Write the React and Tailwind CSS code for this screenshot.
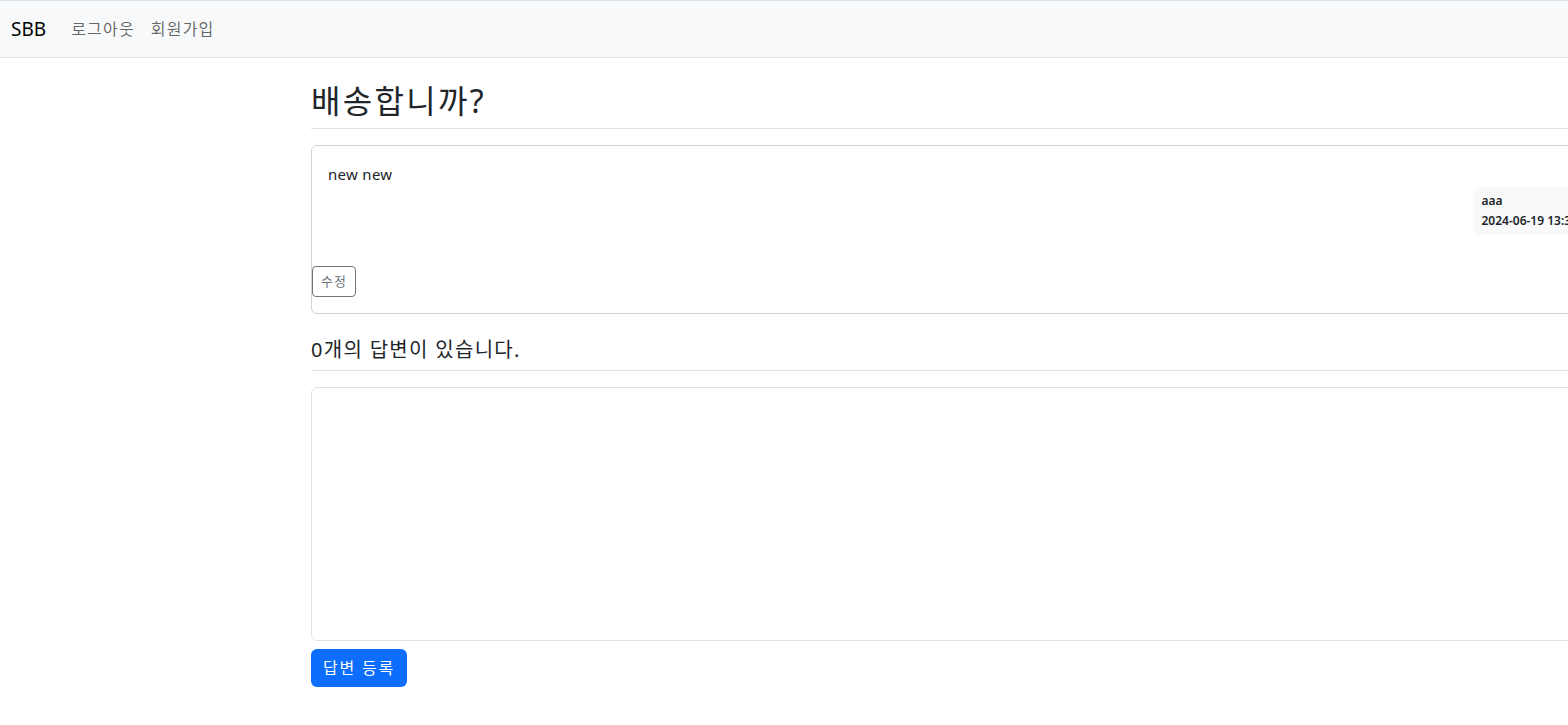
export default function App() {
  const font = { fontFamily: '"Noto Sans", "Noto Sans CJK KR", sans-serif' };
  return (
    <div className="min-h-[725px] w-full overflow-hidden bg-white text-[#212529]" style={font}>
      <nav className="h-[58px] border-t border-b border-[#dee2e6] bg-[#f8f9fa] flex items-center px-[11px]">
        <span className="text-[19px] leading-[30px] text-black mr-[17px]">SBB</span>
        <span className="text-[16px] leading-6 tracking-[1.2px] text-[rgba(0,0,0,0.6)] px-2">로그아웃</span>
        <span className="text-[16px] leading-6 tracking-[1.2px] text-[rgba(0,0,0,0.6)] px-2">회원가입</span>
      </nav>
      <div className="ml-[311px] w-[1309px] pt-4">
        <h2 className="text-[32px] leading-[38px] tracking-[2.3px] py-2 border-b border-[#dee2e6] font-normal">배송합니까?</h2>
        <div className="mt-4 border border-[#cfd1d4] rounded-[6px] flex flex-col">
          <div className="px-4 pt-4">
            <div className="text-[15px] leading-6 tracking-[0.3px] whitespace-pre-line">new new</div>
            <div className="flex justify-end mt-[1px]">
              <div className="bg-[#f8f9fa] rounded-[6px] p-2 text-[12px] leading-3 font-semibold text-[#212529]">
                <div className="mb-2">aaa</div>
                <div>2024-06-19 13:30:52</div>
              </div>
            </div>
          </div>
          <div className="mt-[31px] mb-4">
            <button className="h-[31px] px-2 border border-[#6c757d] rounded-[4px] text-[13px] tracking-[1px] text-[#6c757d] bg-white">수정</button>
          </div>
        </div>
        <h5 className="mt-4 text-[20px] leading-6 tracking-[1.3px] py-2 border-b border-[#dee2e6] font-normal">0개의 답변이 있습니다.</h5>
        <div className="mt-4">
          <textarea className="block w-full h-[254px] border border-[#dee2e6] rounded-[6px] resize-none outline-none"></textarea>
        </div>
        <button className="mt-2 h-[38px] px-3 bg-[#0d6efd] text-white text-[16px] tracking-[1.8px] rounded-[6px]">답변 등록</button>
      </div>
    </div>
  );
}
